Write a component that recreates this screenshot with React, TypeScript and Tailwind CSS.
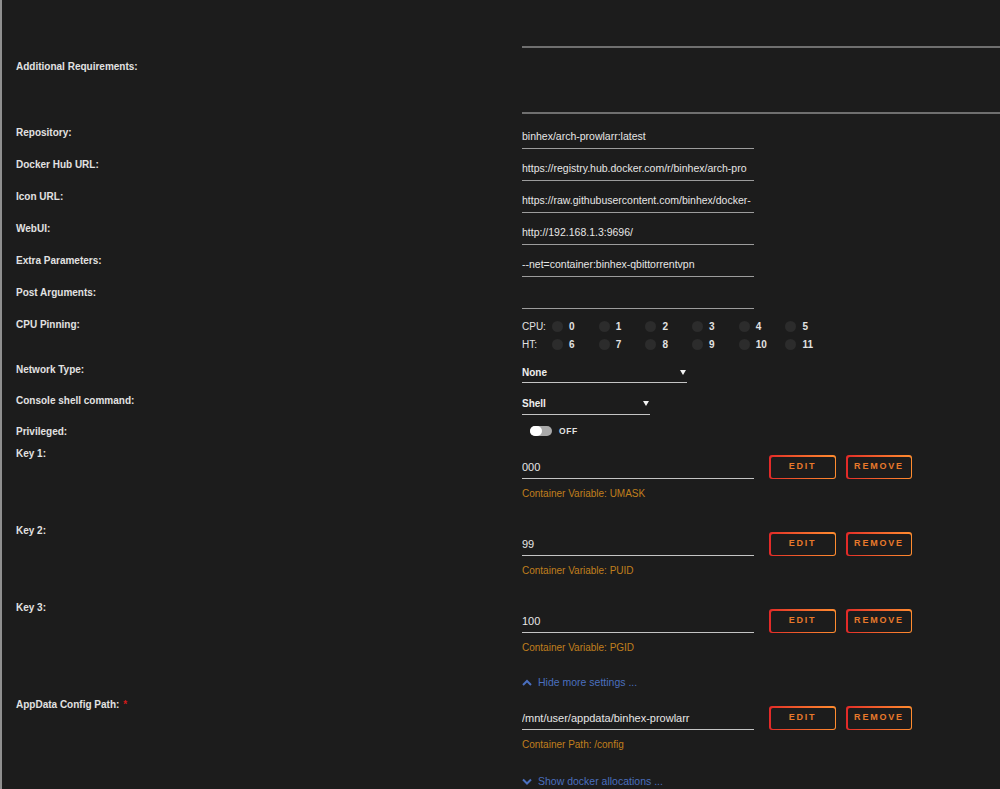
import type { ReactNode } from "react";

const font = "font-['Liberation_Sans',Arial,sans-serif]";

type RowProps = {
  label: string;
  className: string;
  required?: boolean;
  children?: ReactNode;
};

function Row({ label, className, required = false, children }: RowProps) {
  return (
    <div className={`flex ${className}`}>
      <div className="w-[520px] shrink-0 pl-[14px] pt-[6px] text-[10px] font-bold leading-[14px] text-[#e2e2e2]">
        {label}
        {required ? <span className="ml-1 text-[#d11a1a]">*</span> : null}
      </div>
      <div className="flex-1">{children}</div>
    </div>
  );
}

function TextField({ value }: { value: string }) {
  return (
    <div className="h-[29px] w-[232px] overflow-hidden whitespace-nowrap border-b border-[#9c9c9c] pt-[9px] text-[10.5px] leading-[14px] text-[#e6e6e6]">
      {value}
    </div>
  );
}

function Arrow() {
  return (
    <svg width="6" height="5" viewBox="0 0 6 5" className="mr-[1px]">
      <path d="M0 0 H6 L3 5 Z" fill="#f2f2f2" />
    </svg>
  );
}

function GradientButton({ label, width }: { label: string; width: string }) {
  return (
    <div className={`h-[24px] rounded-[3px] bg-linear-to-r from-[#e22828] to-[#ff8c2f] p-[1.5px] ${width}`}>
      <div className="flex h-full w-full items-center justify-center rounded-[2px] bg-[#1c1c1c]">
        <span className="text-[9px] font-bold tracking-[1.8px] text-[#e8792b]">{label}</span>
      </div>
    </div>
  );
}

type KeyRowProps = {
  label: string;
  value: string;
  helper: string;
  required?: boolean;
};

function KeyRow({ label, value, helper, required }: KeyRowProps) {
  return (
    <Row label={label} className="h-[77px]" required={required}>
      <div className="flex items-start">
        <div className="w-[232px]">
          <div className="mt-[18px] h-[20px] overflow-hidden whitespace-nowrap border-b border-[#c4c4c4] text-[11px] leading-[16px] text-[#e6e6e6]">
            {value}
          </div>
          <div className="mt-[8px] text-[10px] leading-[14px] text-[#c07f1c]">{helper}</div>
        </div>
        <div className="ml-[15px] mt-[14px] flex gap-[10px]">
          <GradientButton label="EDIT" width="w-[67px]" />
          <GradientButton label="REMOVE" width="w-[66px]" />
        </div>
      </div>
    </Row>
  );
}

function Chevron({ up }: { up: boolean }) {
  return (
    <svg width="10" height="7" viewBox="0 0 10 7" className="mr-[6px]">
      <path
        d={up ? "M1 6 L5 2 L9 6" : "M1 1.5 L5 5.5 L9 1.5"}
        fill="none"
        stroke="#4a6fbf"
        strokeWidth="2"
      />
    </svg>
  );
}

function LinkLine({ text, up, className }: { text: string; up: boolean; className: string }) {
  return (
    <div className={`flex ${className}`}>
      <div className="w-[520px] shrink-0" />
      <div className="flex h-[14px] items-center text-[10.5px] leading-[14px] text-[#4a6fbf]">
        <Chevron up={up} />
        {text}
      </div>
    </div>
  );
}

const cpuRows = [
  { label: "CPU:", cores: ["0", "1", "2", "3", "4", "5"] },
  { label: "HT:", cores: ["6", "7", "8", "9", "10", "11"] }
];

const simpleFields = [
  { label: "Repository:", value: "binhex/arch-prowlarr:latest" },
  { label: "Docker Hub URL:", value: "https://registry.hub.docker.com/r/binhex/arch-pro" },
  { label: "Icon URL:", value: "https://raw.githubusercontent.com/binhex/docker-" },
  { label: "WebUI:", value: "http://192.168.1.3:9696/" },
  { label: "Extra Parameters:", value: "--net=container:binhex-qbittorrentvpn" },
  { label: "Post Arguments:", value: "" }
];

export default function App() {
  return (
    <div className={`h-[789px] w-[1000px] overflow-hidden border-l-2 border-[#8f8f8f] bg-[#1c1c1c] ${font}`}>
      <div className="flex h-[120px]">
        <div className="w-[520px] shrink-0 pl-[14px] pt-[60px] text-[10px] font-bold leading-[14px] text-[#e2e2e2]">
          Additional Requirements:
        </div>
        <div className="flex-1">
          <div className="mt-[46px] h-[2px] bg-[#6f6f6f]" />
          <div className="mt-[64px] h-[2px] bg-[#6f6f6f]" />
        </div>
      </div>

      {simpleFields.map((field) => (
        <Row key={field.label} label={field.label} className="h-[32px]">
          <TextField value={field.value} />
        </Row>
      ))}

      <Row label="CPU Pinning:" className="h-[45px]">
        <div className="flex flex-col gap-[4px] pt-[7px]">
          {cpuRows.map((row) => (
            <div key={row.label} className="flex h-[14px] items-center text-[10px] text-[#e2e2e2]">
              <span className="w-[30px]">{row.label}</span>
              {row.cores.map((core) => (
                <div key={core} className="flex w-[46.7px] items-center">
                  <span className="h-[11px] w-[11px] rounded-full bg-[#2c2c2c]" />
                  <span className="ml-[6px] font-bold">{core}</span>
                </div>
              ))}
            </div>
          ))}
        </div>
      </Row>

      <Row label="Network Type:" className="h-[31px]">
        <div className="flex h-[26px] w-[165px] items-center justify-between border-b border-[#c4c4c4] pt-[5px] text-[10px] font-bold text-[#eeeeee]">
          <span>None</span>
          <Arrow />
        </div>
      </Row>

      <Row label="Console shell command:" className="h-[31px]">
        <div className="flex h-[27px] w-[128px] items-center justify-between border-b border-[#c4c4c4] pt-[4px] text-[10px] font-bold text-[#eeeeee]">
          <span>Shell</span>
          <Arrow />
        </div>
      </Row>

      <Row label="Privileged:" className="h-[22px]">
        <div className="ml-[8px] mt-[6px] flex items-center">
          <div className="flex h-[10px] w-[22px] items-center rounded-full bg-[#a9a9a9]">
            <span className="h-[10px] w-[12px] rounded-full bg-white" />
          </div>
          <span className="ml-[7px] text-[8.5px] font-bold tracking-[0.6px] text-[#e2e2e2]">OFF</span>
        </div>
      </Row>

      <KeyRow label="Key 1:" value="000" helper="Container Variable: UMASK" />
      <KeyRow label="Key 2:" value="99" helper="Container Variable: PUID" />
      <KeyRow label="Key 3:" value="100" helper="Container Variable: PGID" />

      <LinkLine text="Hide more settings ..." up className="h-[20px] pt-[3px]" />

      <KeyRow label="AppData Config Path:" value="/mnt/user/appdata/binhex-prowlarr" helper="Container Path: /config" required />

      <LinkLine text="Show docker allocations ..." up={false} className="h-[20px] pt-[5px]" />
    </div>
  );
}
